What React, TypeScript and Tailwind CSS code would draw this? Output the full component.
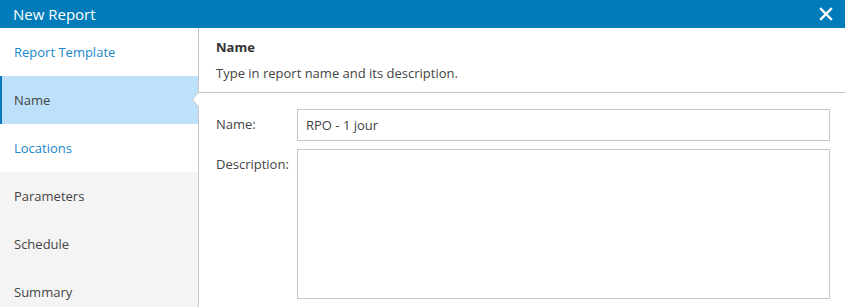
import { useState } from "react";

type Step = { label: string; state: "done" | "active" | "todo" };

const steps: Step[] = [
  { label: "Report Template", state: "done" },
  { label: "Name", state: "active" },
  { label: "Locations", state: "done" },
  { label: "Parameters", state: "todo" },
  { label: "Schedule", state: "todo" },
  { label: "Summary", state: "todo" },
];

function StepItem({ step }: { step: Step }) {
  if (step.state === "active") {
    return (
      <div className="relative flex h-12 shrink-0 items-center border-l-2 border-[#0a7bb8] bg-[#bde0fb] pl-3 pt-[2px] text-[#444]">
        Name
        {/* notch pointing into the content panel */}
        <svg
          className="absolute right-[-1px] top-[16px]"
          width="8"
          height="16"
          viewBox="0 0 8 16"
        >
          <polygon points="8,0 1.5,7.5 8,15" fill="#fff" />
          <polyline points="7.5,0 1.5,7.5 7.5,15" fill="none" stroke="#c6c6c6" strokeWidth="1" />
        </svg>
      </div>
    );
  }
  return (
    <div
      className={
        step.state === "done"
          ? "flex h-12 shrink-0 items-center bg-white pl-[14px] pt-[2px] text-[#1a87c9]"
          : "flex h-12 shrink-0 items-center bg-[#f4f4f4] pl-[14px] pt-[2px] text-[#444]"
      }
    >
      {step.label}
    </div>
  );
}

export default function App() {
  const [name, setName] = useState("RPO - 1 jour");
  const [description, setDescription] = useState("");

  return (
    <div className="flex h-[307px] w-[845px] flex-col overflow-hidden bg-white font-['Open_Sans',sans-serif] text-[13px] text-[#444]">
      <div className="flex h-7 shrink-0 items-center justify-between bg-[#007cba] pl-[13px] pr-[12px] text-white">
        <span className="text-[15px] leading-none">New Report</span>
        <svg width="14" height="14" viewBox="0 0 14 14">
          <path d="M2 2 L12 12 M12 2 L2 12" stroke="#fff" strokeWidth="2.4" strokeLinecap="square" />
        </svg>
      </div>

      <div className="flex min-h-0 flex-1">
        <div className="flex w-[199px] shrink-0 flex-col border-r border-[#c6c6c6] bg-[#f4f4f4]">
          {steps.map((step) => (
            <StepItem key={step.label} step={step} />
          ))}
        </div>

        <div className="flex min-w-0 flex-1 flex-col">
          <div className="flex h-[65px] shrink-0 flex-col gap-[6px] border-b border-[#c6c6c6] pl-[17px] pt-[9px]">
            <div className="font-bold leading-5 text-[#333]">Name</div>
            <div className="leading-5">Type in report name and its description.</div>
          </div>

          <div className="flex flex-col gap-2 pl-[17px] pr-[15px] pt-4">
            <div className="flex items-center">
              <label className="w-[81px] shrink-0">Name:</label>
              <input
                value={name}
                onChange={(e) => setName(e.target.value)}
                className="h-8 min-w-0 flex-1 border border-[#c6c6c6] px-2 text-[#444] outline-none"
              />
            </div>
            <div className="flex items-start">
              <label className="w-[81px] shrink-0 pt-[6px]">Description:</label>
              <textarea
                value={description}
                onChange={(e) => setDescription(e.target.value)}
                className="h-[150px] min-w-0 flex-1 resize-none border border-[#c6c6c6] px-2 py-1 outline-none"
              />
            </div>
          </div>
        </div>
      </div>
    </div>
  );
}
